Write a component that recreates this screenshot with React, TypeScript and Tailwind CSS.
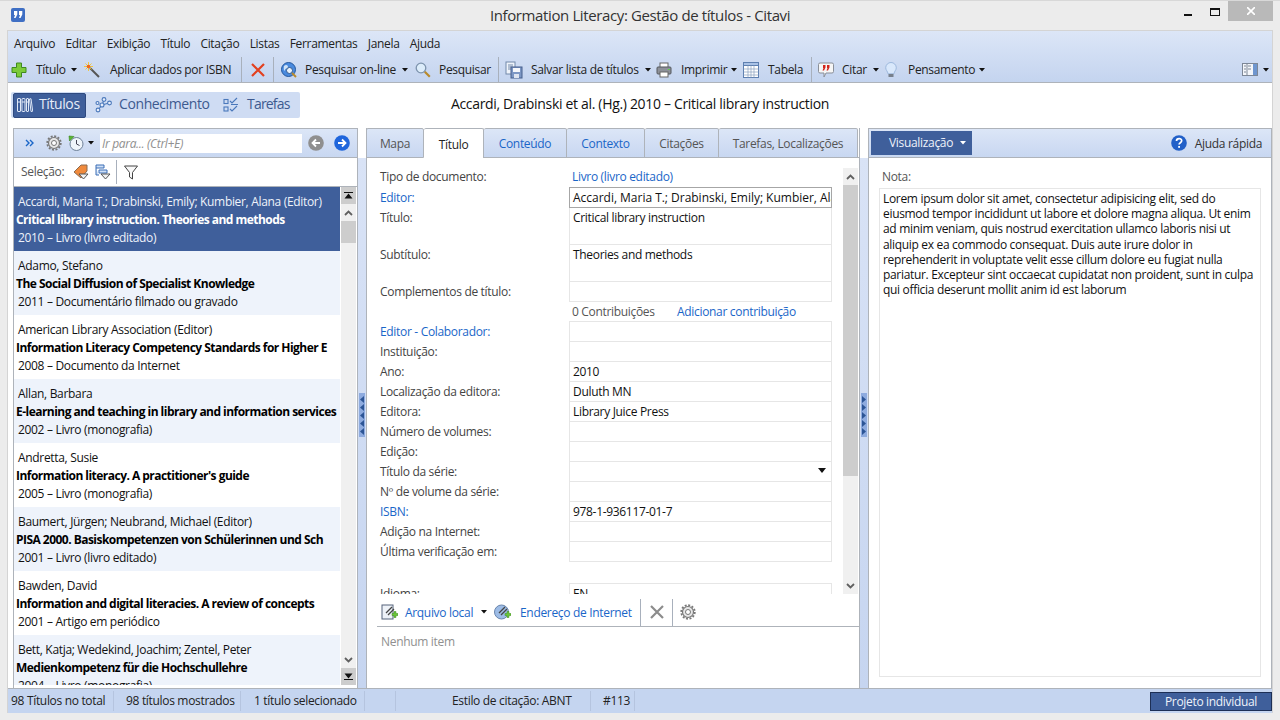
import React from "react"

const Caret = ({ className = "", light = false }: { className?: string; light?: boolean }) => (
  <svg viewBox="0 0 6 4" className={`w-[6px] h-[4px] shrink-0 ${className}`}>
    <path d="M0 0h6L3 3.5z" fill={light ? "#ffffff" : "#111111"} />
  </svg>
)

const Label = ({ className = "", children }: { className?: string; children: React.ReactNode }) => (
  <span className={`whitespace-nowrap shrink-0 ${className}`}>{children}</span>
)

const Sep = ({ className = "" }: { className?: string }) => (
  <div className={`w-px bg-[#a8b0bc] shrink-0 ${className}`} />
)

const Plus = ({ className = "" }: { className?: string }) => (
  <svg viewBox="0 0 16 16" className={`w-4 h-4 shrink-0 ${className}`}>
    <path d="M5.5 1h5v4.5H15v5h-4.5V15h-5v-4.5H1v-5h4.5z" fill="#7ccb3a" stroke="#3f8a1e" />
  </svg>
)

const Wand = ({ className = "" }: { className?: string }) => (
  <svg viewBox="0 0 16 16" className={`w-4 h-4 shrink-0 ${className}`}>
    <path d="M6 6l9 9" stroke="#555" strokeWidth="2" />
    <path d="M4.5 0v9M0 4.5h9M1.5 1.5l6 6M7.5 1.5l-6 6" stroke="#f4c430" strokeWidth=".9" />
    <circle cx="4.5" cy="4.500" r="1.800" fill="#f0651d" />
  </svg>
)

const Cross = ({ className = "", color = "#e2401f" }: { className?: string; color?: string }) => (
  <svg viewBox="0 0 16 16" className={`w-4 h-4 shrink-0 ${className}`}>
    <path d="M2 2l12 12M14 2L2 14" stroke={color} strokeWidth="2.2" />
  </svg>
)

const Globe = ({ className = "" }: { className?: string }) => (
  <svg viewBox="0 0 16 16" className={`w-4 h-4 shrink-0 ${className}`}>
    <circle cx="7.5" cy="7.5" r="7" fill="#4a8ade" stroke="#24579c" />
    <path d="M3 4c2-2 4-1 4 1s-3 1-3 3-2 0-1-4z" fill="#cfe3f8" />
    <circle cx="8.5" cy="8.5" r="3" fill="#e9f3fc" stroke="#35598c" />
    <path d="M11 11l4 4" stroke="#b98a2b" strokeWidth="2" />
  </svg>
)

const Magnifier = ({ className = "" }: { className?: string }) => (
  <svg viewBox="0 0 16 16" className={`w-4 h-4 shrink-0 ${className}`}>
    <circle cx="6" cy="6" r="4.8" fill="#dcecfa" stroke="#7d93ad" strokeWidth="1.3" />
    <path d="M9.8 9.8l5 5" stroke="#b98a2b" strokeWidth="2.2" />
  </svg>
)

const SaveList = ({ className = "" }: { className?: string }) => (
  <svg viewBox="0 0 18 18" className={`w-[18px] h-[18px] shrink-0 ${className}`}>
    <rect x="1" y="1" width="9" height="12" fill="#eef3fa" stroke="#7289aa" />
    <path d="M3 4h5M3 6h5M3 8h5" stroke="#7289aa" />
    <rect x="6" y="6" width="11" height="11" fill="#7d97c4" stroke="#465f8c" />
    <rect x="8" y="7" width="7" height="4" fill="#f5f7fb" />
    <rect x="9" y="13" width="5" height="4" fill="#dde4f0" />
  </svg>
)

const Printer = ({ className = "" }: { className?: string }) => (
  <svg viewBox="0 0 16 16" className={`w-4 h-4 shrink-0 ${className}`}>
    <rect x="4" y="1" width="8" height="5" fill="#fff" stroke="#666" />
    <rect x="1" y="5" width="14" height="7" rx="1" fill="#8d9199" stroke="#55585e" />
    <rect x="4" y="10" width="8" height="5" fill="#fff" stroke="#666" />
    <rect x="12" y="7" width="2" height="1" fill="#5fd04a" />
  </svg>
)

const TableIcon = ({ className = "" }: { className?: string }) => (
  <svg viewBox="0 0 16 16" className={`w-4 h-4 shrink-0 ${className}`}>
    <rect x=".5" y=".5" width="15" height="15" fill="#fff" stroke="#5d7fb0" />
    <rect x=".5" y=".5" width="15" height="3" fill="#a9c2e6" stroke="#5d7fb0" />
    <path d="M.5 7h15M.5 10h15M.5 13h15M5 3.5v12M8 3.5v12M11 3.5v12" stroke="#8aa0bf" strokeWidth=".7" />
  </svg>
)

const QuoteBubble = ({ className = "" }: { className?: string }) => (
  <svg viewBox="0 0 16 16" className={`w-4 h-4 shrink-0 ${className}`}>
    <path d="M2 1h12a1.5 1.5 0 0 1 1.500 1.500v7A1.500 1.500 0 0 1 14 11H8l-2 4v-4H2A1.500 1.500 0 0 1 .5 9.500v-7A1.500 1.500 0 0 1 2 1z" fill="#f6f6f6" stroke="#8a8f98" />
    <path d="M5 3h2.500v2.500L6 8.500H4.500L5.500 6H5zM9 3h2.500v2.500L10 8.500H8.500L9.500 6H9z" fill="#d3261c" />
  </svg>
)

const Bulb = ({ className = "" }: { className?: string }) => (
  <svg viewBox="0 0 12 16" className={`w-3 h-4 shrink-0 ${className}`}>
    <path d="M6 .5a5.300 5.300 0 0 1 5.300 5.300c0 2.400-2 3.400-2.300 6H3c-.3-2.600-2.300-3.600-2.300-6A5.300 5.300 0 0 1 6 .5z" fill="#d9e8fb" stroke="#9db8dc" />
    <rect x="3.500" y="12" width="5" height="3" fill="#77808c" />
  </svg>
)

const LayoutIcon = ({ className = "" }: { className?: string }) => (
  <svg viewBox="0 0 16 13" className={`w-4 h-[13px] shrink-0 ${className}`}>
    <rect x=".5" y=".5" width="15" height="12" fill="#f4f6fa" stroke="#7d8796" />
    <rect x="11" y="1" width="4" height="11" fill="#6f96cf" />
    <path d="M2 3h2M2 6h2M2 9h2M6 3h3M6 6h3" stroke="#7d8796" />
    <path d="M5 .5v12" stroke="#7d8796" />
  </svg>
)

const Gear = ({ className = "" }: { className?: string }) => (
  <svg viewBox="0 0 16 16" className={`w-4 h-4 shrink-0 ${className}`}>
    <circle cx="8" cy="8" r="5.500" fill="#e6e6e6" stroke="#777" strokeWidth="1.200" />
    <circle cx="8" cy="8" r="6.800" fill="none" stroke="#777" strokeWidth="1.800" strokeDasharray="2 1.560" />
    <circle cx="8" cy="8" r="2.500" fill="#fff" stroke="#777" />
  </svg>
)

const Clock = ({ className = "" }: { className?: string }) => (
  <svg viewBox="0 0 16 16" className={`w-4 h-4 shrink-0 ${className}`}>
    <circle cx="8.500" cy="9" r="6.500" fill="#eef4fa" stroke="#6f8198" />
    <path d="M8.500 5v4l3 1.500" stroke="#445" fill="none" />
    <path d="M1 1l5 .5L1.500 6z" fill="#58b830" stroke="#35801a" strokeWidth=".6" />
  </svg>
)

const RoundArrow = ({ color, dir }: { color: string; dir: "left" | "right" }) => (
  <svg viewBox="0 0 16 16" className="w-4 h-4 shrink-0">
    <circle cx="8" cy="8" r="7.800" fill={color} />
    <path d={dir === "left" ? "M12 8H5M8 4.500L4.500 8 8 11.500" : "M4 8h7M8 4.500L11.500 8 8 11.500"} stroke="#fff" strokeWidth="1.800" fill="none" />
  </svg>
)

const Books = () => (
  <svg viewBox="0 0 16 16" className="w-4 h-4 shrink-0" fill="none" stroke="#e0e8f6" strokeWidth="1">
    <rect x=".5" y="1.500" width="3" height="13" rx=".5" />
    <rect x="5" y="1.500" width="3" height="13" rx=".5" />
    <rect x="9.500" y="1.500" width="2" height="13" rx=".5" />
    <path d="M12.500 2l1.500-.3 1.700 12.500-1.700.3z" />
    <path d="M.5 5h3M5 5h3M9.500 5h2" />
  </svg>
)

const Network = () => (
  <svg viewBox="0 0 17 16" className="w-[17px] h-4 shrink-0" fill="#e6eefb" stroke="#4a78bb" strokeWidth="1.100">
    <path d="M3 13L7 8M7 8L9 3M7 8l7-2" fill="none" />
    <circle cx="3" cy="13" r="1.900" />
    <circle cx="7" cy="8" r="2" />
    <circle cx="9" cy="2.500" r="1.900" />
    <circle cx="14.500" cy="6" r="1.900" />
    <circle cx="2.500" cy="6" r="1.500" />
  </svg>
)

const Tasks = () => (
  <svg viewBox="0 0 17 16" className="w-[17px] h-4 shrink-0" fill="none" stroke="#4a78bb" strokeWidth="1.100">
    <rect x="1" y="2.500" width="4" height="4" />
    <rect x="1" y="10" width="4" height="4" />
    <path d="M7 4l2 2 5-5M7 12l2 2 5-5M8 7.500h7" />
  </svg>
)

const Help = () => (
  <svg viewBox="0 0 16 16" className="w-4 h-4 shrink-0">
    <circle cx="8" cy="8" r="7.800" fill="#2260c8" />
    <path d="M5.500 6c0-3.200 5.200-3.200 5.200-.2 0 2-2.600 1.800-2.600 3.800" stroke="#fff" strokeWidth="1.700" fill="none" />
    <rect x="7.200" y="11" width="1.800" height="1.800" fill="#fff" />
  </svg>
)

const TagDown = ({ className = "" }: { className?: string }) => (
  <svg viewBox="0 0 16 16" className={`w-4 h-4 shrink-0 ${className}`}>
    <path d="M1 8l7-7h6v6l-6 7z" fill="#f08a3c" stroke="#8a6a50" />
    <path d="M6 10h9l-4.500 5z" fill="#f2f2f2" stroke="#555" />
  </svg>
)

const TreeDown = ({ className = "" }: { className?: string }) => (
  <svg viewBox="0 0 16 16" className={`w-4 h-4 shrink-0 ${className}`}>
    <path d="M1 1h8v3H1zM4 6h8v3H4zM1 4v7h3" fill="#cfe0f6" stroke="#3c6fb6" />
    <path d="M6 10h9l-4.500 5z" fill="#f2f2f2" stroke="#555" />
  </svg>
)

const Funnel = ({ className = "" }: { className?: string }) => (
  <svg viewBox="0 0 14 15" className={`w-[14px] h-[15px] shrink-0 ${className}`}>
    <path d="M.5 1h13L8.500 7.500V14l-3-2V7.500z" fill="#f8f8f8" stroke="#444" />
  </svg>
)

const FileLink = ({ className = "", web = false }: { className?: string; web?: boolean }) => (
  <svg viewBox="0 0 17 17" className={`w-[17px] h-[17px] shrink-0 ${className}`}>
    {web ? (
      <circle cx="7.500" cy="8" r="7" fill="#9dbce6" stroke="#6a86ad" />
    ) : (
      <rect x="1" y="1" width="11" height="14" fill="#eef2f8" stroke="#55627a" />
    )}
    <path d="M5 9l6-6M7 11l6-6" stroke="#444" strokeWidth="1.300" />
    <path d="M11 9.500h2V7.500h2v2h2v2h-2v2h-2v-2h-2z" fill="#6cc53a" stroke="#3b8a1e" strokeWidth=".5" />
  </svg>
)

const Chevron = ({ dir }: { dir: "up" | "down" }) => (
  <svg viewBox="0 0 9 6" className="w-[9px] h-[6px]">
    <path d={dir === "up" ? "M1 5l3.500-3.500L8 5" : "M1 1l3.500 3.500L8 1"} stroke="#606060" strokeWidth="1.800" fill="none" />
  </svg>
)

const EdgeBtn = ({ dir }: { dir: "top" | "bottom" }) => (
  <div className="h-[17px] bg-[#cdcdcd] flex items-center justify-center shrink-0">
    <svg viewBox="0 0 9 7" className="w-[9px] h-[7px]">
      {dir === "top" ? <path d="M0 0h9v1H0zM4.500 1.500L8.500 6.500h-8z" fill="#111" /> : <path d="M0 6h9v1H0zM4.500 5.500L.5.500h8z" fill="#111" />}
    </svg>
  </div>
)

const Grip = ({ dir }: { dir: "left" | "right" }) => (
  <div className="w-[6px] h-[44px] bg-[#8eabdf] flex flex-col items-center justify-center gap-[1px]">
    {[0, 1, 2, 3, 4].map((i) => (
      <svg key={i} viewBox="0 0 4 7" className="w-[4px] h-[7px]">
        <path d={dir === "left" ? "M4 0v7L0 3.500z" : "M0 0v7l4-3.500z"} fill="#2c5596" />
      </svg>
    ))}
  </div>
)

const Splitter = ({ dir }: { dir: "left" | "right" }) => (
  <div className="w-[8px] shrink-0 flex flex-col">
    <div className="h-[30px] bg-white" />
    <div className="flex-1 bg-gradient-to-b from-[#d9e3f6] to-[#c6d5f0] flex items-center justify-center pb-[16px]">
      <Grip dir={dir} />
    </div>
  </div>
)

const titles = [
  ["Accardi, Maria T.; Drabinski, Emily; Kumbier, Alana (Editor)", "Critical library instruction. Theories and methods", "2010 – Livro (livro editado)"],
  ["Adamo, Stefano", "The Social Diffusion of Specialist Knowledge", "2011 – Documentário filmado ou gravado"],
  ["American Library Association (Editor)", "Information Literacy Competency Standards for Higher E", "2008 – Documento da Internet"],
  ["Allan, Barbara", "E-learning and teaching in library and information services", "2002 – Livro (monografia)"],
  ["Andretta, Susie", "Information literacy. A practitioner's guide", "2005 – Livro (monografia)"],
  ["Baumert, Jürgen; Neubrand, Michael (Editor)", "PISA 2000. Basiskompetenzen von Schülerinnen und Sch", "2001 – Livro (livro editado)"],
  ["Bawden, David", "Information and digital literacies. A review of concepts", "2001 – Artigo em periódico"],
  ["Bett, Katja; Wedekind, Joachim; Zentel, Peter", "Medienkompetenz für die Hochschullehre", "2004 – Livro (monografia)"],
]

const TitleItem = ({ item, index }: { item: string[]; index: number }) => {
  const selected = index === 0
  const bg = selected ? "bg-[#3f5f9b] text-[#eef2fa]" : index % 2 === 1 ? "bg-[#eef3fb] text-[#111]" : "bg-white text-[#111]"
  return (
    <div className={`h-[64px] shrink-0 pt-[6px] pl-[2px] overflow-hidden whitespace-nowrap leading-[18px] ${bg}`}>
      <div className="pl-[2px]">{item[0]}</div>
      <div className={`font-bold tracking-[-0.53px] ${selected ? "text-white" : "text-black"}`}>{item[1]}</div>
      <div className="pl-[2px]">{item[2]}</div>
    </div>
  )
}

const Row = ({
  label,
  value,
  link = false,
  tall = false,
  dark = false,
  children,
}: {
  label: string
  value?: string
  link?: boolean
  tall?: boolean
  dark?: boolean
  children?: React.ReactNode
}) => (
  <div className={`flex -mb-px ${tall ? "h-[38px]" : "h-[21px]"}`}>
    <div className={`w-[189px] shrink-0 leading-[22px] whitespace-nowrap ${link ? "text-[#1a66c8]" : "text-[#444]"}`}>{label}</div>
    <div className={`w-[263px] shrink-0 border pl-[3px] leading-[20px] text-[#111] whitespace-nowrap overflow-hidden relative ${dark ? "border-[#a6a6a6] z-10 bg-white tracking-[-0.02px]" : "border-[#e6e6e6]"}`}>
      {value}
      {children}
    </div>
  </div>
)

const tabs = [
  { name: "Mapa", w: "w-[58px]", color: "text-[#555]" },
  { name: "Título", w: "w-[60px]", color: "text-[#222]", active: true },
  { name: "Conteúdo", w: "w-[83px]", color: "text-[#1a66c8]" },
  { name: "Contexto", w: "w-[78px]", color: "text-[#1a66c8]" },
  { name: "Citações", w: "w-[74px]", color: "text-[#555]" },
  { name: "Tarefas, Localizações", w: "w-[139px]", color: "text-[#555]" },
]

export default function App() {
  return (
    <div className="w-[1280px] h-[720px] bg-[#ececec] flex flex-col overflow-hidden text-[12px] text-[#222] font-['Open_Sans','Noto_Sans',sans-serif] tracking-[-0.32px] border-t border-[#d8d8d8]">
      {/* Title bar */}
      <div className="h-[29px] shrink-0 grid grid-cols-[1fr_auto_1fr]">
        <div className="pl-[11px] pt-[7px]">
          <svg viewBox="0 0 14 14" className="w-[14px] h-[14px]">
            <rect width="14" height="14" rx="2" fill="#3f6fc4" />
            <path d="M3 3h3.300v3.500L4.500 10H3l1-3H3zM8 3h3.300v3.500L9.500 10H8l1-3H8z" fill="#fff" />
          </svg>
        </div>
        <div className="text-[15px] text-[#333] leading-[28px] tracking-[-0.38px]">Information Literacy: Gestão de títulos - Citavi</div>
        <div className="flex justify-end pr-[7px]">
          <div className="w-[8px] h-[2px] bg-[#111] mt-[13px]" />
          <div className="w-[10px] h-[8px] border border-[#111] border-t-2 mt-[7px] ml-[18px]" />
          <div className="w-[45px] h-[20px] bg-[#b9b9b9] ml-[8px] flex items-center justify-center">
            <svg viewBox="0 0 8 8" className="w-2 h-2"><path d="M0 0l8 8M8 0L0 8" stroke="#fff" strokeWidth="1.600" /></svg>
          </div>
        </div>
      </div>

      {/* Window body */}
      <div className="ml-[7px] mr-[7px] h-[683px] shrink-0 flex flex-col border border-[#d4d4d4] border-b-0 bg-white">
        {/* Menu and toolbar */}
        <div className="h-[52px] shrink-0 bg-gradient-to-b from-[#dce6f7] to-[#c4d4ef] border-b border-[#aeb3ba] flex flex-col">
          <div className="h-[25px] flex items-center pl-[6px] gap-[10.300px] text-[#222]">
            <Label>Arquivo</Label>
            <Label>Editar</Label>
            <Label>Exibição</Label>
            <Label>Título</Label>
            <Label>Citação</Label>
            <Label>Listas</Label>
            <Label>Ferramentas</Label>
            <Label>Janela</Label>
            <Label>Ajuda</Label>
          </div>
          <div className="flex-1 flex items-center pt-px">
            <Plus className="ml-[3px]" />
            <Label className="ml-[9px] w-[35px]">Título</Label>
            <Caret />
            <Wand className="ml-[7px]" />
            <Label className="ml-[10px] w-[121px]">Aplicar dados por ISBN</Label>
            <Sep className="ml-[10px] h-[25px]" />
            <Cross className="ml-[8px]" />
            <Sep className="ml-[7px] h-[25px]" />
            <Globe className="ml-[7px]" />
            <Label className="ml-[8px] w-[91px]">Pesquisar on-line</Label>
            <Caret className="ml-[6px]" />
            <Magnifier className="ml-[7px]" />
            <Label className="ml-[8px] w-[50px]">Pesquisar</Label>
            <Sep className="ml-[9px] h-[25px]" />
            <SaveList className="ml-[6px]" />
            <Label className="ml-[8px] w-[107px]">Salvar lista de títulos</Label>
            <Caret className="ml-[7px]" />
            <Printer className="ml-[5px]" />
            <Label className="ml-[9px] w-[44px]">Imprimir</Label>
            <Caret className="ml-[6px]" />
            <TableIcon className="ml-[6px]" />
            <Label className="ml-[9px] w-[34px]">Tabela</Label>
            <Sep className="ml-[9px] h-[25px]" />
            <QuoteBubble className="ml-[6px]" />
            <Label className="ml-[8px] w-[24px]">Citar</Label>
            <Caret className="ml-[7px]" />
            <Bulb className="ml-[6px]" />
            <Label className="ml-[11px] w-[65px]">Pensamento</Label>
            <Caret className="ml-[6px]" />
            <LayoutIcon className="ml-auto" />
            <Caret className="ml-[5px] mr-[3px]" />
          </div>
        </div>

        {/* View switch and current title */}
        <div className="h-[45px] shrink-0 grid grid-cols-[1fr_auto_1fr] pt-[9px]">
          <div className="pl-[3px]">
            <div className="w-[289px] h-[26px] bg-[#cfdcf3] rounded-[2px] flex items-center text-[14px] text-[#3d5a8f] tracking-[-0.4px] leading-[22px]">
              <div className="ml-[2px] w-[73px] h-[25px] bg-[#3f5f9b] border border-[#2f4a80] rounded-[2px] flex items-center text-[#e6edf9] pl-[3px]">
                <Books />
                <span className="ml-[6px] pb-[2px]">Títulos</span>
              </div>
              <div className="ml-[9px]"><Network /></div>
              <Label className="ml-[7px] w-[96px] pb-[2px]">Conhecimento</Label>
              <div className="ml-[8px]"><Tasks /></div>
              <Label className="ml-[7px] tracking-[-0.8px] pb-[2px]">Tarefas</Label>
            </div>
          </div>
          <div className="text-[14px] text-[#111] leading-[24px] tracking-[-0.32px]">Accardi, Drabinski et al. (Hg.) 2010 – Critical library instruction</div>
          <div />
        </div>

        {/* Panels */}
        <div className="flex-1 min-h-0 flex pl-[5px]">
          {/* Left panel */}
          <div className="w-[345px] shrink-0 border border-b-0 border-[#aeb3ba] flex flex-col bg-white">
            <div className="h-[29px] shrink-0 bg-gradient-to-b from-[#dce6f7] to-[#c8d7f1] border-b border-[#aeb3ba] flex items-center">
              <svg viewBox="0 0 9 8" className="w-[9px] h-2 ml-[11px] shrink-0">
                <path d="M1 1l3 3-3 3M5 1l3 3-3 3" stroke="#1a66c8" strokeWidth="1.400" fill="none" />
              </svg>
              <Gear className="ml-[12px]" />
              <Clock className="ml-[6px]" />
              <Caret className="ml-[4px]" />
              <div className="ml-[6px] w-[202px] h-[19px] bg-white italic text-[#909090] leading-[20px] pl-[2px]">Ir para... (Ctrl+E)</div>
              <div className="ml-[6px]"><RoundArrow color="#8f8f8f" dir="left" /></div>
              <div className="ml-[10px]"><RoundArrow color="#1f66dc" dir="right" /></div>
            </div>
            <div className="h-[29px] shrink-0 border-b border-[#aeb3ba] flex items-center text-[#555]">
              <Label className="ml-[7px] w-[42px]">Seleção:</Label>
              <TagDown className="ml-[10px]" />
              <TreeDown className="ml-[6px]" />
              <Sep className="ml-[5px] h-[24px]" />
              <Funnel className="ml-[7px]" />
            </div>
            <div className="flex-1 min-h-0 flex pb-[3px]">
              <div className="w-[326px] shrink-0 flex flex-col overflow-hidden">
                {titles.map((item, i) => (
                  <TitleItem key={i} item={item} index={i} />
                ))}
              </div>
              <div className="w-[15px] shrink-0 ml-px bg-[#f0f0f0] flex flex-col">
                <EdgeBtn dir="top" />
                <div className="h-[17px] shrink-0 flex items-center justify-center"><Chevron dir="up" /></div>
                <div className="h-[22px] shrink-0 bg-[#cdcdcd]" />
                <div className="flex-1" />
                <div className="h-[17px] shrink-0 flex items-center justify-center"><Chevron dir="down" /></div>
                <EdgeBtn dir="bottom" />
              </div>
            </div>
          </div>

          <Splitter dir="left" />

          {/* Middle panel */}
          <div className="w-[494px] shrink-0 border border-b-0 border-t-0 border-[#aeb3ba] flex flex-col bg-white">
            <div className="h-[30px] shrink-0 flex -ml-px">
              {tabs.map((tab) => (
                <div
                  key={tab.name}
                  className={`${tab.w} shrink-0 border-t border-r border-[#aeb3ba] first:border-l rounded-t-[2px] flex items-center justify-center pt-[2px] ${tab.color} ${
                    tab.active ? "bg-white" : "bg-gradient-to-b from-[#dce6f7] to-[#c8d7f1] border-b"
                  }`}
                >
                  {tab.name}
                </div>
              ))}
              <div className="flex-1 border-b border-[#aeb3ba]" />
            </div>
            <div className="h-[440px] shrink-0 flex">
              <div className="w-[476px] shrink-0 h-[436px] overflow-hidden pl-[13px] pt-[8px]">
                <div className="flex h-[21px] leading-[22px]">
                  <div className="w-[192px] shrink-0 text-[#444]">Tipo de documento:</div>
                  <div className="text-[#1a66c8]">Livro (livro editado)</div>
                </div>
                <Row label="Editor:" link dark value="Accardi, Maria T.; Drabinski, Emily; Kumbier, Alana (Editor)" />
                <Row label="Título:" tall value="Critical library instruction" />
                <Row label="Subtítulo:" tall value="Theories and methods" />
                <Row label="Complementos de título:" />
                <div className="h-[20px] mt-px -mb-px flex leading-[20px] pl-[192px] text-[#555]">
                  <div className="w-[105px] shrink-0">0 Contribuições</div>
                  <div className="text-[#1a66c8]">Adicionar contribuição</div>
                </div>
                <Row label="Editor - Colaborador:" link />
                <Row label="Instituição:" />
                <Row label="Ano:" value="2010" />
                <Row label="Localização da editora:" value="Duluth MN" />
                <Row label="Editora:" value="Library Juice Press" />
                <Row label="Número de volumes:" />
                <Row label="Edição:" />
                <Row label="Título da série:">
                  <svg viewBox="0 0 8 5" className="w-2 h-[5px] absolute right-[5px] top-[6px]"><path d="M0 0h8L4 5z" fill="#111" /></svg>
                </Row>
                <Row label="Nº de volume da série:" />
                <Row label="ISBN:" link value="978-1-936117-01-7" />
                <Row label="Adição na Internet:" />
                <Row label="Última verificação em:" />
                <div className="h-[22px]" />
                <Row label="Idioma:" value="EN" />
              </div>
              <div className="w-[15px] h-[426px] mt-[10px] shrink-0 bg-[#f0f0f0] flex flex-col">
                <div className="h-[17px] shrink-0 flex items-center justify-center"><Chevron dir="up" /></div>
                <div className="h-[291px] shrink-0 bg-[#cdcdcd]" />
                <div className="flex-1" />
                <div className="h-[17px] shrink-0 flex items-center justify-center"><Chevron dir="down" /></div>
              </div>
            </div>
            <div className="h-[29px] ml-[10px] shrink-0 border-b border-[#aeb3ba] flex items-center text-[#1a66c8] leading-[20px]">
              <FileLink className="ml-[4px]" />
              <Label className="ml-[7px] w-[70px] pt-[2px]">Arquivo local</Label>
              <Caret className="ml-[6px]" />
              <FileLink web className="ml-[7px]" />
              <Label className="ml-[9px] w-[110px] pt-[2px]">Endereço de Internet</Label>
              <Sep className="ml-[10px] h-[27px]" />
              <Cross color="#8c8c8c" className="ml-[8px]" />
              <Sep className="ml-[7px] h-[27px]" />
              <Gear className="ml-[7px]" />
            </div>
            <div className="pl-[14px] pt-[5px] leading-[20px] text-[#909090]">Nenhum item</div>
          </div>

          <Splitter dir="right" />

          {/* Right panel */}
          <div className="w-[404px] shrink-0 border border-b-0 border-[#aeb3ba] flex flex-col bg-white">
            <div className="h-[29px] shrink-0 bg-gradient-to-b from-[#dce6f7] to-[#c8d7f1] border-b border-[#aeb3ba] flex items-center">
              <div className="ml-[2px] w-[101px] h-[24px] bg-[#3f5f9b] text-[#eef2fa] flex items-center pl-[18px] leading-[26px]">
                <Label className="w-[65px]">Visualização</Label>
                <Caret light className="ml-[6px]" />
              </div>
              <div className="ml-auto"><Help /></div>
              <Label className="ml-[8px] mr-[9px] text-[#333] pt-[2px]">Ajuda rápida</Label>
            </div>
            <div className="pl-[13px] pt-[9px] leading-[20px] text-[#555]">Nota:</div>
            <div className="ml-[10px] mt-[1px] w-[382px] h-[489px] border border-[#e6e6e6] pt-[2px] pl-[3px] leading-[15.200px] text-[#111] whitespace-nowrap">
              <div>Lorem ipsum dolor sit amet, consectetur adipisicing elit, sed do</div>
              <div>eiusmod tempor incididunt ut labore et dolore magna aliqua. Ut enim</div>
              <div>ad minim veniam, quis nostrud exercitation ullamco laboris nisi ut</div>
              <div>aliquip ex ea commodo consequat. Duis aute irure dolor in</div>
              <div>reprehenderit in voluptate velit esse cillum dolore eu fugiat nulla</div>
              <div>pariatur. Excepteur sint occaecat cupidatat non proident, sunt in culpa</div>
              <div>qui officia deserunt mollit anim id est laborum</div>
            </div>
          </div>
        </div>

        {/* Status bar */}
        <div className="h-[25px] shrink-0 bg-[#c5d5f0] flex items-center text-[#222] border-t border-[#aeb3ba] leading-[18px]">
          <Label className="ml-[3px] w-[96px] pb-px">98 Títulos no total</Label>
          <Sep className="ml-[6px] h-[20px] bg-[#b5c4df]" />
          <Label className="ml-[12px] w-[108px] pb-px">98 títulos mostrados</Label>
          <Sep className="ml-[6px] h-[20px] bg-[#b5c4df]" />
          <Label className="ml-[13px] w-[104px] pb-px">1 título selecionado</Label>
          <Sep className="ml-[6px] h-[20px] bg-[#b5c4df]" />
          <Sep className="ml-[30px] h-[20px] bg-[#b5c4df]" />
          <Label className="ml-[56px] w-[121px] pb-px">Estilo de citação: ABNT</Label>
          <Sep className="ml-[17px] h-[20px] bg-[#b5c4df]" />
          <Label className="ml-[12px] w-[28px] pb-px">#113</Label>
          <Sep className="ml-[3px] h-[20px] bg-[#b5c4df]" />
          <div className="ml-auto w-[122px] h-[19px] bg-[#3f5f9b] border border-[#1d2f55] text-[#eef2fa] text-center leading-[17px]">Projeto individual</div>
        </div>
      </div>
    </div>
  )
}
